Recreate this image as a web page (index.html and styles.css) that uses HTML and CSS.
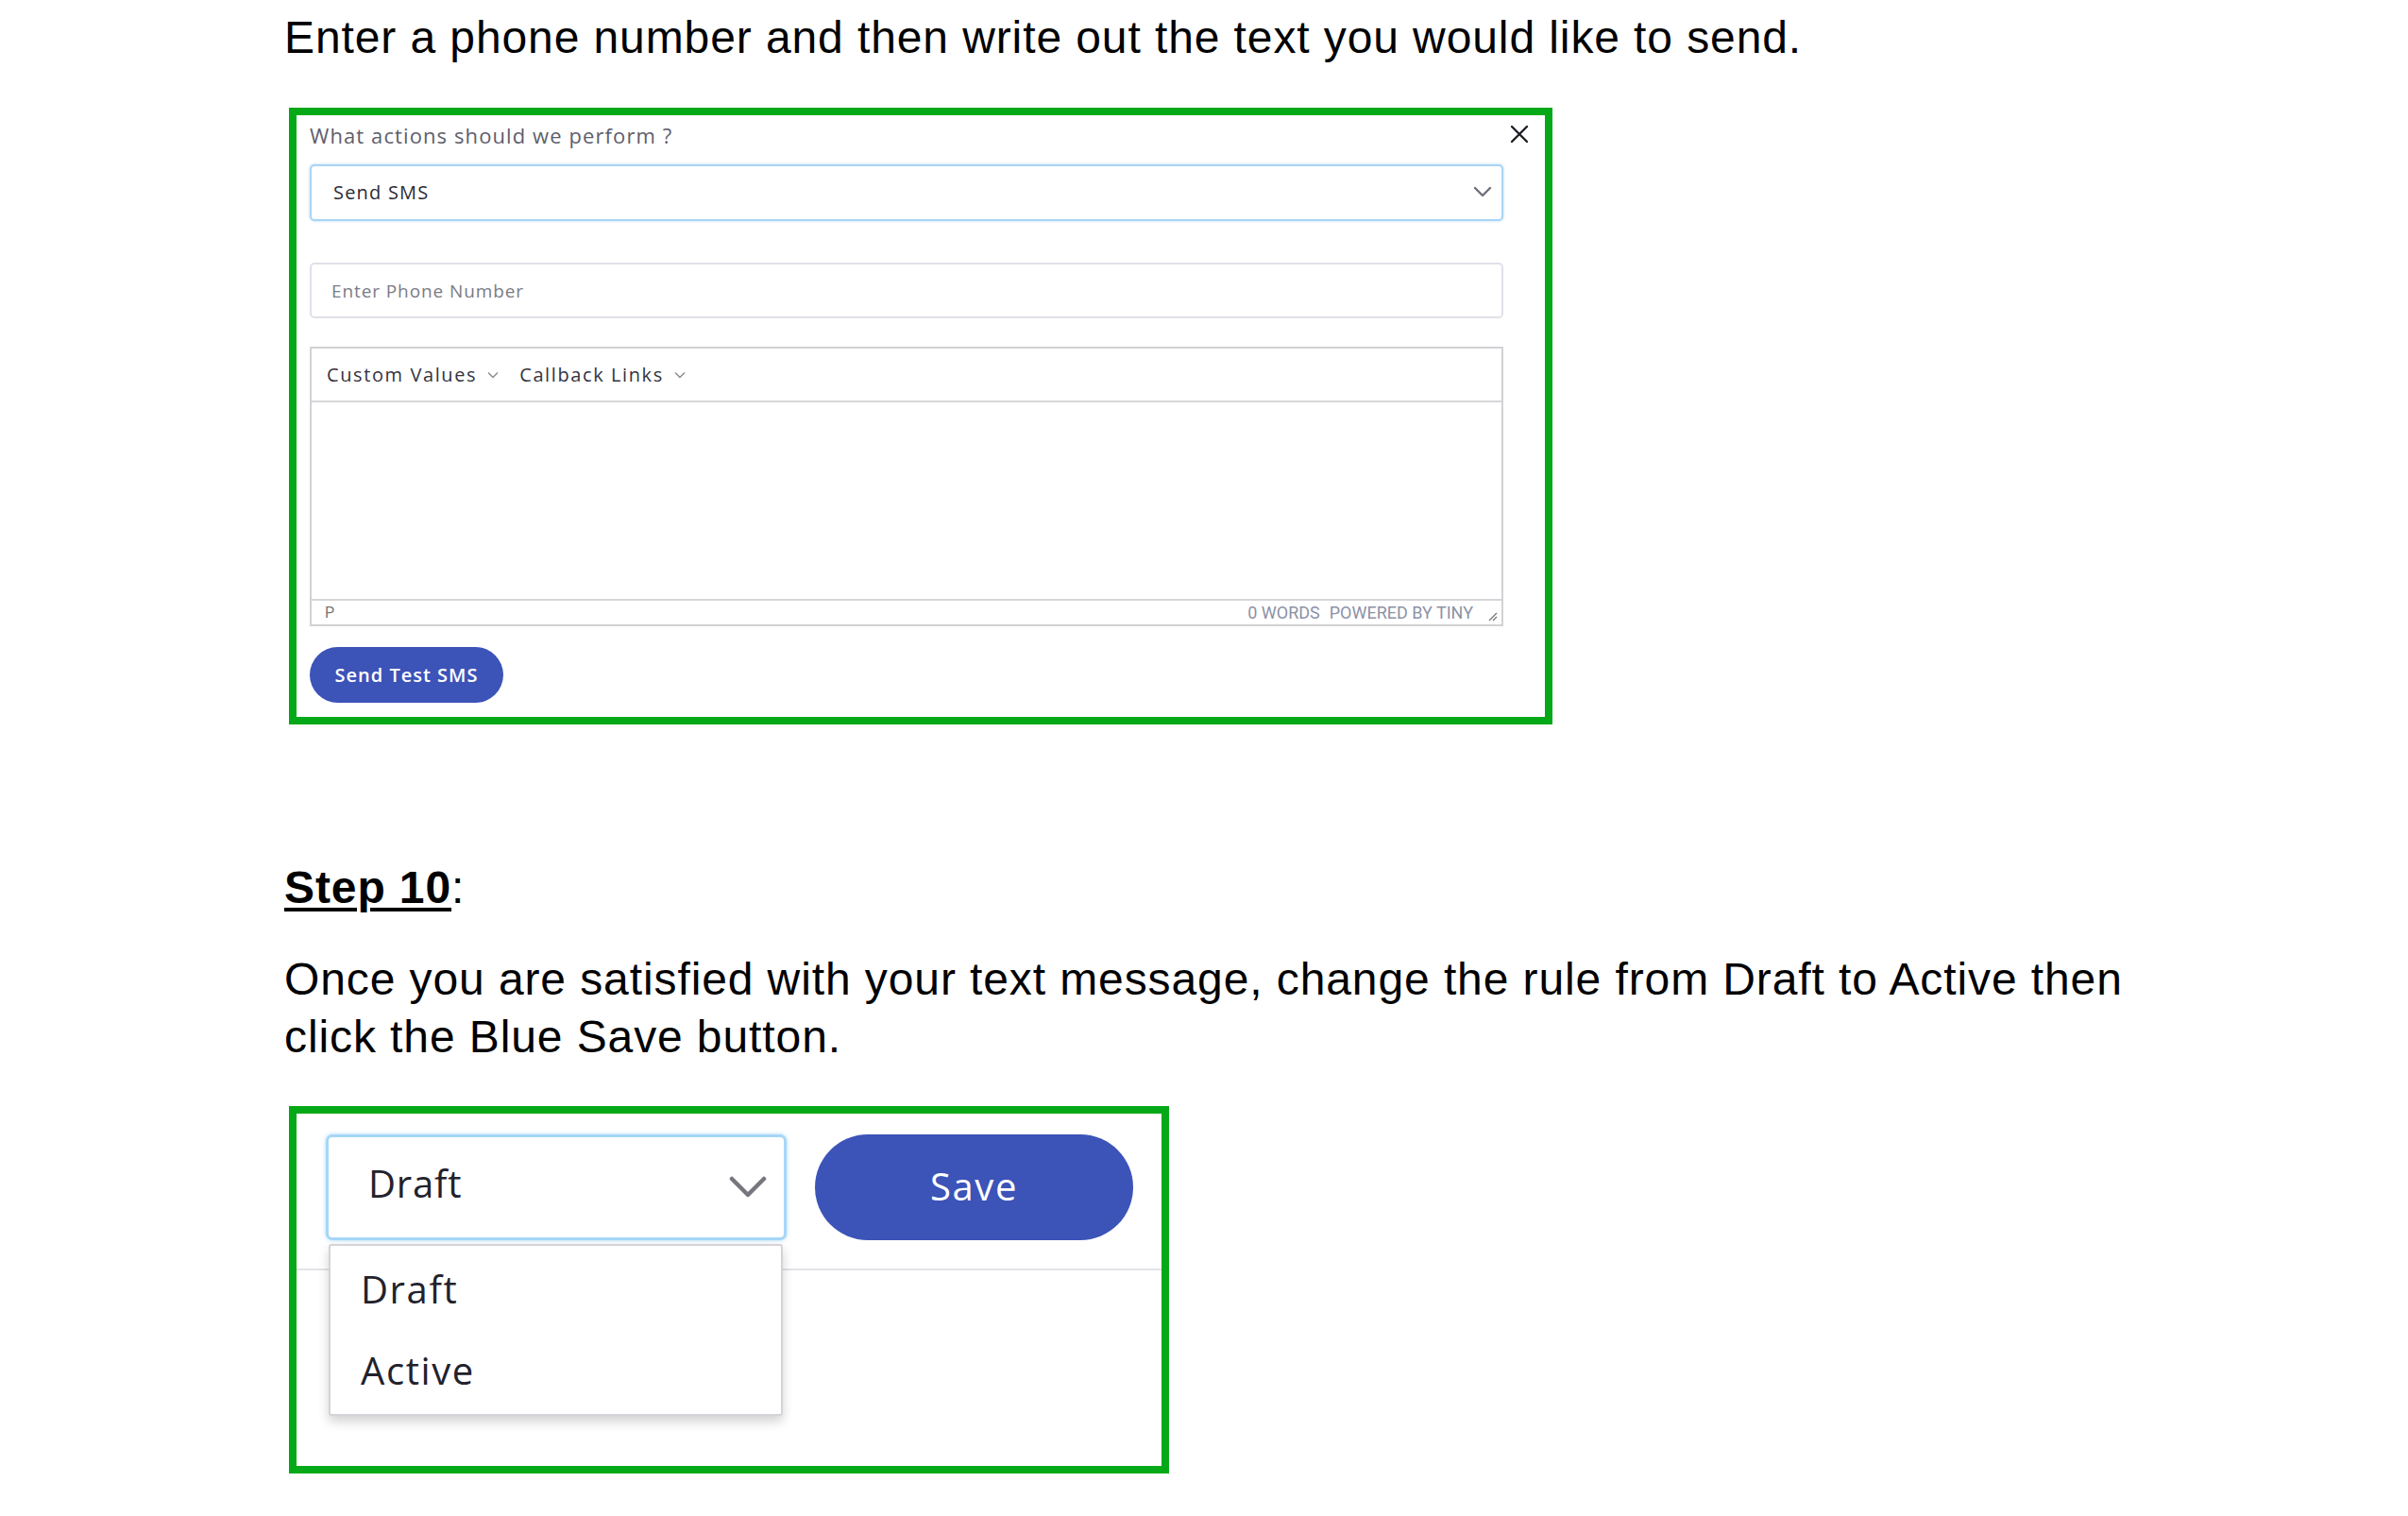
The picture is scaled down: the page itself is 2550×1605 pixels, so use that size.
FILE: index.html
```html
<!DOCTYPE html>
<html lang="en">
<head>
<meta charset="utf-8">
<title>Send SMS step</title>
<link rel="stylesheet" href="styles.css">
</head>
<body>
<main class="doc">
  <p class="text lead">Enter a phone number and then write out the text you would like to send.</p>

  <section class="frame frame-action">
    <button class="close" aria-label="Close">
      <svg viewBox="0 0 20 20" width="20" height="20"><path d="M2 2 L18 18 M18 2 L2 18" stroke="#1e1e24" stroke-width="2.4" fill="none" stroke-linecap="round"/></svg>
    </button>
    <div class="panel">
      <div class="panel-head">
        <span class="field-label">What actions should we perform ?</span>
      </div>
      <div class="select select-action">
        <span class="select-value">Send SMS</span>
        <svg class="chev" viewBox="0 0 20 12" width="20" height="12"><path d="M2 2 L10 10 L18 2" stroke="#6f6f7c" stroke-width="2.4" fill="none" stroke-linecap="round" stroke-linejoin="round"/></svg>
      </div>
      <div class="input">
        <span class="placeholder">Enter Phone Number</span>
      </div>
      <div class="editor">
        <div class="editor-toolbar">
          <span class="menu">Custom Values
            <svg viewBox="0 0 12 8" width="12" height="8"><path d="M1 1.5 L6 6.5 L11 1.5" stroke="#8a8a94" stroke-width="1.4" fill="none"/></svg>
          </span>
          <span class="menu">Callback Links
            <svg viewBox="0 0 12 8" width="12" height="8"><path d="M1 1.5 L6 6.5 L11 1.5" stroke="#8a8a94" stroke-width="1.4" fill="none"/></svg>
          </span>
        </div>
        <div class="editor-body"></div>
        <div class="editor-status">
          <span class="path">P</span>
          <span class="status-right">
            <span>0 WORDS</span>
            <span>POWERED BY TINY</span>
            <svg class="resize" viewBox="0 0 12 12" width="12" height="12"><path d="M11 3 L3 11 M11 7 L7 11" stroke="#777" stroke-width="1.3" fill="none"/></svg>
          </span>
        </div>
      </div>
      <button class="btn btn-test">Send Test SMS</button>
    </div>
  </section>

  <h2 class="text step"><u>Step 10</u>:</h2>
  <p class="text para">Once you are satisfied with your text message, change the rule from Draft to Active then click the Blue Save button.</p>

  <section class="frame frame-status">
    <div class="status-row">
      <div class="status-select">
        <div class="select select-status">
          <span class="select-value">Draft</span>
          <svg class="chev-big" viewBox="0 0 40 24" width="40" height="24"><path d="M3 3 L20 20 L37 3" stroke="#76767e" stroke-width="4.5" fill="none" stroke-linecap="round" stroke-linejoin="round"/></svg>
        </div>
        <ul class="dropdown">
          <li>Draft</li>
          <li>Active</li>
        </ul>
      </div>
      <button class="btn btn-save">Save</button>
    </div>
    <div class="divider"></div>
    <div class="status-body"></div>
  </section>
</main>
</body>
</html>
```

FILE: styles.css
```css
* { box-sizing: border-box; }

html, body {
  margin: 0;
  padding: 0;
  background: #ffffff;
}

.doc {
  padding: 9px 0 0 301px;
}

.text {
  font-family: "Liberation Sans", Arial, sans-serif;
  font-size: 48px;
  line-height: 61px;
  letter-spacing: 0.9px;
  color: #000;
  margin: 0;
  font-weight: 400;
}

.lead { margin-bottom: 44px; }

.step {
  margin-top: 142px;
  margin-bottom: 36px;
}
.step u {
  font-weight: 700;
  text-decoration-thickness: 4px;
  text-underline-offset: 5px;
}

.para {
  max-width: 1990px;
  margin-bottom: 43px;
}

/* green highlight frames */
.frame {
  position: relative;
  margin-left: 5px;
  border: 8px solid #05a817;
  background: #fff;
  font-family: "Open Sans", "Noto Sans", sans-serif;
}

.frame-action { width: 1338px; }
.frame-status { width: 932px; }

.panel {
  display: flex;
  flex-direction: column;
  align-items: flex-start;
  padding: 6px 44px 15px 14px;
}

.panel-head {
  height: 30px;
  display: flex;
  align-items: center;
  margin-bottom: 16px;
}

.field-label {
  font-size: 22px;
  letter-spacing: 1.1px;
  color: #5e5e6c;
}

.close {
  position: absolute;
  top: 10px;
  right: 17px;
  width: 20px;
  height: 20px;
  padding: 0;
  border: 0;
  background: none;
  display: flex;
}

.select {
  display: flex;
  align-items: center;
  justify-content: space-between;
  background: #fff;
}

.select-action {
  width: 100%;
  height: 60px;
  border: 2px solid #a9d5f5;
  border-radius: 5px;
  box-shadow: 0 0 3px rgba(110, 185, 240, 0.55);
  padding: 0 10px 2px 23px;
  margin-bottom: 44px;
}

.select-action .select-value {
  font-size: 20px;
  letter-spacing: 1.2px;
  color: #2b2b36;
}

.input {
  width: 100%;
  height: 59px;
  border: 2px solid #e0e0ea;
  border-radius: 5px;
  display: flex;
  align-items: center;
  padding-left: 21px;
  margin-bottom: 30px;
}

.placeholder {
  font-size: 19px;
  letter-spacing: 0.9px;
  color: #7b7b86;
}

.editor {
  width: 100%;
  height: 296px;
  border: 2px solid #d2d2d6;
  display: flex;
  flex-direction: column;
  margin-bottom: 22px;
}

.editor-toolbar {
  height: 57px;
  border-bottom: 2px solid #d6d6da;
  display: flex;
  align-items: center;
  gap: 22px;
  padding-left: 16px;
}

.menu {
  display: inline-flex;
  align-items: center;
  gap: 11px;
  font-size: 20px;
  letter-spacing: 1.6px;
  color: #33333e;
}

.editor-body { flex: 1; }

.editor-status {
  height: 27px;
  border-top: 2px solid #d6d6da;
  display: flex;
  align-items: center;
  justify-content: space-between;
  padding: 0 4px 0 14px;
  font-family: "Roboto", "Liberation Sans", sans-serif;
  font-size: 18px;
  color: #8c92a6;
}

.path { color: #777; font-size: 16px; }

.status-right {
  display: flex;
  align-items: center;
  gap: 10px;
}

.resize { margin-left: 4px; margin-top: 6px; }

.btn {
  border: 0;
  border-radius: 999px;
  background: #3c53b8;
  color: #fff;
  font-family: "Open Sans", "Noto Sans", sans-serif;
  font-weight: 600;
  display: flex;
  align-items: center;
  justify-content: center;
  padding: 0;
}

.btn-test {
  width: 205px;
  height: 59px;
  font-size: 20px;
  letter-spacing: 1px;
}

/* status frame */
.status-row {
  display: flex;
  align-items: flex-start;
  gap: 30px;
  padding: 22px 30px 0 31px;
}

.status-select {
  position: relative;
  width: 488px;
}

.select-status {
  height: 112px;
  border: 3px solid #a6d6f7;
  border-radius: 7px;
  box-shadow: 0 0 4px rgba(110, 190, 245, 0.6);
  padding: 0 18px 10px 42px;
}

.select-status .select-value {
  font-size: 40px;
  color: #22222c;
  letter-spacing: 0.8px;
}

.chev-big { margin-top: 10px; }

.dropdown {
  position: absolute;
  top: 116px;
  left: 3px;
  width: 481px;
  margin: 0;
  padding: 0;
  list-style: none;
  height: 182px;
  background: #fff;
  border: 2px solid #d4d4d8;
  border-radius: 3px;
  box-shadow: 0 6px 12px rgba(0, 0, 0, 0.18);
  z-index: 2;
}

.dropdown li {
  height: 82px;
  display: flex;
  align-items: center;
  padding-left: 32px;
  font-size: 40px;
  color: #22222c;
  letter-spacing: 1.6px;
}
.dropdown li:first-child { height: 90px; }

.btn-save {
  width: 337px;
  height: 112px;
  font-size: 40px;
  font-weight: 500;
  letter-spacing: 1.6px;
  padding-bottom: 4px;
}

.divider {
  height: 2px;
  background: #e3e3e8;
  margin-top: 30px;
}

.status-body {
  height: 207px;
}
```
